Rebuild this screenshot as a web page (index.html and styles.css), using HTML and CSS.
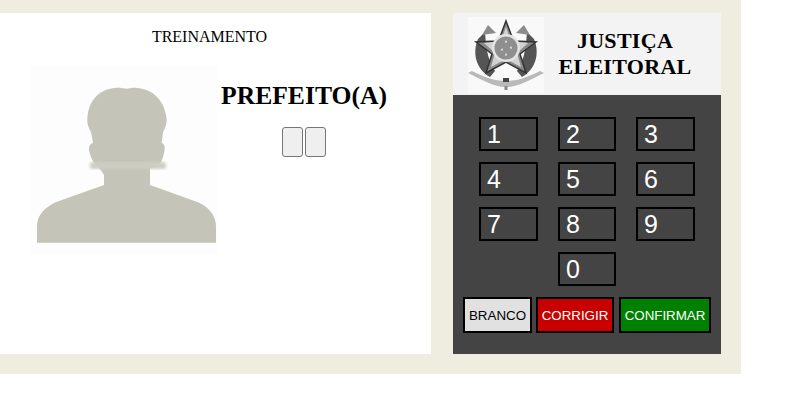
FILE: index.html
```html
<!DOCTYPE html>
<html lang="pt-BR">
<head>
  <meta charset="UTF-8" />
  <meta name="viewport" content="width=device-width, initial-scale=1.0" />
  <title>Urna</title>
  <link rel="stylesheet" href="styles.css">
</head>
<body>
  <div class="urna">
    <div class="tela">
      <div class="tela-titulo">TREINAMENTO</div>
      <div class="tela-corpo">
        <div class="foto">
          <svg viewBox="0 0 188 190" width="188" height="190">
            <path fill="#c4c4b9" d="M7 177.700V161C7 150 15 142 27 136.700L74 120V110C72 106 69 103 66.500 101C62 96 60 90 59 85C59 81 60 79 63 77.700L61 67C58 62 57 58 57.300 54C58 42 62 34 70 28C76 24 83 22.700 90 22.700L96.700 23.700L103 22.700C111 22.700 119 25 125 30C132 36 136 45 136.700 55C136.500 60 135 64 133 67L131.700 77.700C134 79 135 81 134.700 84C134 90 132 96 130 99C127 102 122 103 120 103V120L166.700 136.700C178 141 186 150 186 161V177.700Z"/>
            <rect x="60" y="97" width="76" height="7" rx="3" fill="#cdcdc3" filter="url(#borrao)"/>
            <defs>
              <filter id="borrao"><feGaussianBlur stdDeviation="1.500"/></filter>
            </defs>
          </svg>
        </div>
        <div class="cargo">
          <div class="cargo-nome">PREFEITO(A)</div>
          <div class="digitos">
            <input class="digito" disabled>
            <input class="digito" disabled>
          </div>
        </div>
      </div>
    </div>

    <div class="teclado">
      <div class="cabecalho">
        <div class="brasao">
          <svg viewBox="0 0 76 76" width="76" height="76">
            <defs>
              <filter id="suave"><feGaussianBlur stdDeviation="0.700"/></filter>
            </defs>
            <g filter="url(#suave)">
              <path d="M0 56C12 62 26 70 38 70C50 70 64 62 76 56L72 54C60 60 50 64 38 64C26 64 16 60 4 54Z" fill="#b9b9b9"/>
              <path d="M22 60C8 52 4 36 10 22L17 15C18 26 18 40 27 54Z" fill="#555"/>
              <path d="M54 60C68 52 72 36 66 22L59 15C58 26 58 40 49 54Z" fill="#555"/>
              <path d="M14 18L20 8L28 16ZM62 18L56 8L48 16Z" fill="#8c8c8c"/>
              <path d="M38 4L45.500 24L68 25L52 37L58 56L38 45L18 56L24 37L8 25L30.500 24Z" fill="#8a8a8a" stroke="#333" stroke-width="1.500"/>
              <path d="M38 10L43 24L60 26L49 36L53 50L38 42L23 50L27 36L16 26L33 24Z" fill="#d2d2d2"/>
              <circle cx="38" cy="31" r="14" fill="#e4e4e4"/>
              <circle cx="38" cy="31" r="11.500" fill="#8f8f8f"/>
              <path d="M38 23l1 2-1 1-1-1zM43 29l1 2-1 1-1-1zM34 31l1 2-1 1-1-1zM38 36l1 2-1 1-1-1z" fill="#eee"/>
              <rect x="36" y="50" width="4" height="12" fill="#fff"/>
              <rect x="35" y="61" width="6" height="4" fill="#444"/>
              <rect x="36.500" y="69" width="3" height="4" fill="#888"/>
            </g>
          </svg>
        </div>
        <div class="justica">JUSTIÇA<br>ELEITORAL</div>
      </div>
      <div class="teclas">
        <div class="tecla">1</div>
        <div class="tecla">2</div>
        <div class="tecla">3</div>
        <div class="tecla">4</div>
        <div class="tecla">5</div>
        <div class="tecla">6</div>
        <div class="tecla">7</div>
        <div class="tecla">8</div>
        <div class="tecla">9</div>
        <div class="tecla tecla-zero">0</div>
      </div>
      <div class="acoes">
        <button class="acao branco">BRANCO</button>
        <button class="acao corrigir">CORRIGIR</button>
        <button class="acao confirmar">CONFIRMAR</button>
      </div>
    </div>
  </div>
</body>
</html>
```

FILE: styles.css
```css
* {
  box-sizing: border-box;
}

body {
  margin: 0;
  background: #fff;
}

.urna {
  display: flex;
  gap: 22px;
  width: 741px;
  height: 374px;
  padding-top: 13px;
  background: #efece0;
}

.tela {
  width: 431px;
  height: 341px;
  background: #fff;
  font-family: "Liberation Serif", serif;
  color: #000;
}

.tela-titulo {
  width: 419px;
  padding-top: 15px;
  font-size: 16px;
  line-height: 18px;
  text-align: center;
}

.tela-corpo {
  display: flex;
  margin-top: 19px;
  padding-left: 30px;
}

.foto {
  width: 188px;
  height: 190px;
  background: #fdfdfd;
}

.foto svg {
  display: block;
}

.cargo {
  width: 172px;
  text-align: center;
}

.cargo-nome {
  padding-top: 16px;
  font-size: 25.6px;
  font-weight: bold;
  line-height: 29px;
}

.digitos {
  display: flex;
  justify-content: center;
  gap: 2px;
  margin-top: 17px;
}

.digito {
  width: 21px;
  height: 30px;
  padding: 0;
  border: 1px solid #767676;
  border-radius: 3px;
  background: #efefef;
}

.teclado {
  width: 268px;
  height: 341px;
  background: #444;
}

.cabecalho {
  display: flex;
  height: 82px;
  padding: 4px 0 0 15px;
  background: #f3f3f3;
}

.brasao {
  width: 76px;
  height: 76px;
  background: #f9f9f9;
}

.brasao svg {
  display: block;
}

.justica {
  width: 162px;
  padding-top: 11px;
  font-family: "Liberation Serif", serif;
  font-size: 22px;
  font-weight: bold;
  line-height: 26px;
  letter-spacing: 0.3px;
  text-align: center;
  color: #000;
}

.teclas {
  display: grid;
  grid-template-columns: 59px 58px 59px;
  column-gap: 20px;
  row-gap: 11px;
  padding: 22px 0 0 26px;
}

.tecla {
  height: 34px;
  padding-left: 6px;
  border: 2px solid #000;
  font-family: "Liberation Sans", Arial, sans-serif;
  font-size: 25px;
  line-height: 30px;
  color: #fff;
}

.tecla-zero {
  grid-column: 2;
}

.acoes {
  display: flex;
  margin-top: 11px;
  padding-left: 10px;
}

.acao {
  height: 36px;
  padding: 0;
  border: 2px solid #000;
  font-family: "Liberation Sans", Arial, sans-serif;
  font-size: 13.333px;
}

.branco {
  width: 69px;
  background: #e1e1e1;
  color: #000;
}

.corrigir {
  width: 78px;
  margin-left: 4px;
  background: #c80000;
  color: #fff;
}

.confirmar {
  width: 92px;
  margin-left: 5px;
  background: #008000;
  color: #fff;
}
```
